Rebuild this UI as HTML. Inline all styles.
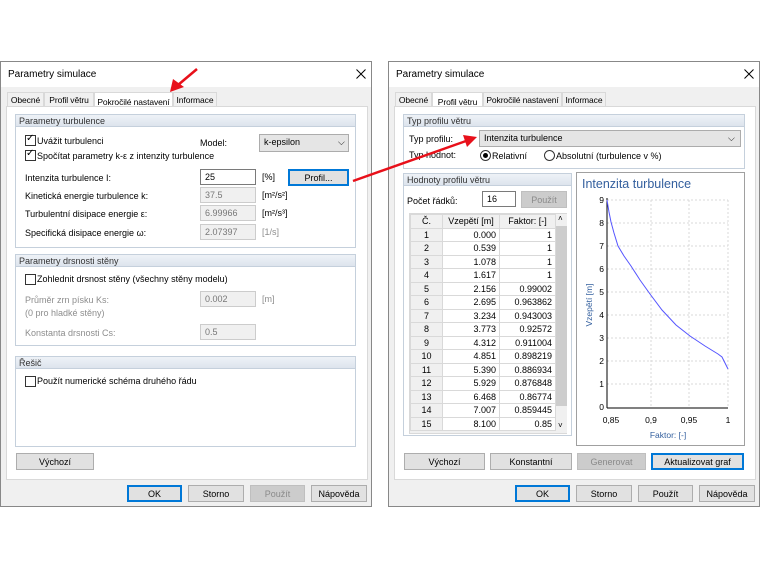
<!DOCTYPE html>
<html><head><meta charset="utf-8"><style>
*{box-sizing:border-box;margin:0;padding:0}
body{width:760px;height:570px;background:#fff;position:relative;overflow:hidden;font-family:"Liberation Sans",sans-serif;font-size:9px;color:#000}
.a{position:absolute;white-space:nowrap}
.dlg{position:absolute;top:61px;width:372px;height:446px;background:#f0f0f0;border:1px solid #888}
.tb{position:absolute;left:0;top:0;width:100%;height:25px;background:#fff}
.panel{position:absolute;background:#fff;border:1px solid #d9d9d9}
.tab{position:absolute;height:14px;border:1px solid #d9d9d9;border-bottom:none;background:#f0f0f0;padding:2px 0 0;font-size:8.5px;text-align:center;letter-spacing:-0.1px;overflow:hidden}
.tab.on{background:#fff;height:17px;top:-3px}
.grp{position:absolute;border:1px solid #c5d0dc;background:#fff}
.gh{height:12px;background:linear-gradient(#eef2f7,#dde4ed);border-bottom:1px solid #c5d0dc;color:#333;padding:1px 3px;font-size:9px}
.inp{position:absolute;height:16px;border:1px solid #ccc;background:#f0f0f0;color:#777;padding:2px 4px;font-size:9px}
.inp.w{background:#fff;border-color:#7a7a7a;color:#000}
.btn{position:absolute;height:17px;border:1px solid #adadad;background:#e1e1e1;text-align:center;padding-top:3px;font-size:9px}
.btn.f{border:1px solid #0078d7;box-shadow:inset 0 0 0 1px #0078d7}
.btn.d{background:#ccc;border-color:#bfbfbf;color:#8a8a8a}
.cb{position:absolute;width:11px;height:11px;border:1px solid #333;background:#fff}
.g{color:#8d8d8d}
table{border-collapse:collapse;font-size:9px}
td{border:1px solid #d9d9d9;height:13.5px;text-align:right;padding:0 3px}
td.n{background:#f0f0f0;text-align:center}
</style></head><body>

<!-- LEFT DIALOG -->
<div class="dlg" style="left:0">
 <div class="tb"><span class="a" style="left:7px;top:7px;font-size:10px">Parametry simulace</span><svg class="a" style="left:355px;top:7px" width="10" height="10"><path d="M0.5 0.5L9.5 9.5M9.5 0.5L0.5 9.5" stroke="#000" stroke-width="1"/></svg></div>
 <div class="tab" style="left:6px;top:30px;width:37px">Obecné</div>
 <div class="tab" style="left:43px;top:30px;width:50px">Profil větru</div>
 <div class="tab on" style="left:93px;top:30px;width:79px;background:#fff;padding-top:4px">Pokročilé nastavení</div>
 <div class="tab" style="left:172px;top:30px;width:44px">Informace</div>
 <div class="panel" style="left:5px;top:44px;width:362px;height:374px"></div>
 <div class="grp" style="left:14px;top:52px;width:341px;height:134px"><div class="gh">Parametry turbulence</div></div>
 <div class="cb" style="left:24px;top:73px"></div><span class="a" style="left:25px;top:71px;font-size:10px">✓</span><span class="a" style="left:36px;top:74px">Uvážit turbulenci</span>
 <span class="a" style="left:199px;top:76px">Model:</span>
 <div class="inp w" style="left:258px;top:72px;width:90px;height:18px;background:#e5e5e5;border-color:#acacac">k-epsilon<span class="a" style="left:78px;top:2px">⌵</span></div>
 <div class="cb" style="left:24px;top:88px"></div><span class="a" style="left:25px;top:86px;font-size:10px">✓</span><span class="a" style="left:36px;top:89px">Spočítat parametry k-ε z intenzity turbulence</span>
 <span class="a" style="left:24px;top:111px">Intenzita turbulence I:</span>
 <div class="inp w" style="left:199px;top:107px;width:56px">25</div><span class="a" style="left:261px;top:110px">[%]</span>
 <div class="btn f" style="left:287px;top:107px;width:61px">Profil...</div>
 <span class="a" style="left:24px;top:129px">Kinetická energie turbulence k:</span>
 <div class="inp" style="left:199px;top:125px;width:56px">37.5</div><span class="a" style="left:261px;top:128px">[m²/s²]</span>
 <span class="a" style="left:24px;top:147px">Turbulentní disipace energie ε:</span>
 <div class="inp" style="left:199px;top:143px;width:56px">6.99966</div><span class="a" style="left:261px;top:146px">[m²/s³]</span>
 <span class="a" style="left:24px;top:166px">Specifická disipace energie ω:</span>
 <div class="inp" style="left:199px;top:162px;width:56px">2.07397</div><span class="a g" style="left:261px;top:165px">[1/s]</span>
 <div class="grp" style="left:14px;top:192px;width:341px;height:92px"><div class="gh">Parametry drsnosti stěny</div></div>
 <div class="cb" style="left:24px;top:212px"></div><span class="a" style="left:36px;top:212px">Zohlednit drsnost stěny (všechny stěny modelu)</span>
 <span class="a g" style="left:24px;top:233px">Průměr zrn písku Ks:</span>
 <span class="a g" style="left:24px;top:246px">(0 pro hladké stěny)</span>
 <div class="inp" style="left:199px;top:229px;width:56px">0.002</div><span class="a g" style="left:261px;top:232px">[m]</span>
 <span class="a g" style="left:24px;top:266px">Konstanta drsnosti Cs:</span>
 <div class="inp" style="left:199px;top:262px;width:56px">0.5</div>
 <div class="grp" style="left:14px;top:294px;width:341px;height:91px"><div class="gh">Řešič</div></div>
 <div class="cb" style="left:24px;top:314px"></div><span class="a" style="left:36px;top:314px">Použít numerické schéma druhého řádu</span>
 <div class="btn" style="left:15px;top:391px;width:78px">Výchozí</div>
 <div class="btn f" style="left:126px;top:423px;width:55px">OK</div>
 <div class="btn" style="left:187px;top:423px;width:56px">Storno</div>
 <div class="btn d" style="left:249px;top:423px;width:55px">Použít</div>
 <div class="btn" style="left:310px;top:423px;width:56px">Nápověda</div>
</div>

<!-- RIGHT DIALOG -->
<div class="dlg" style="left:388px">
 <div class="tb"><span class="a" style="left:7px;top:7px;font-size:10px">Parametry simulace</span><svg class="a" style="left:355px;top:7px" width="10" height="10"><path d="M0.5 0.5L9.5 9.5M9.5 0.5L0.5 9.5" stroke="#000" stroke-width="1"/></svg></div>
 <div class="tab" style="left:6px;top:30px;width:37px">Obecné</div>
 <div class="tab on" style="left:43px;top:30px;width:51px;background:#fff;padding-top:4px">Profil větru</div>
 <div class="tab" style="left:94px;top:30px;width:79px">Pokročilé nastavení</div>
 <div class="tab" style="left:173px;top:30px;width:44px">Informace</div>
 <div class="panel" style="left:5px;top:44px;width:362px;height:374px"></div>
 <div class="grp" style="left:14px;top:52px;width:342px;height:55px"><div class="gh">Typ profilu větru</div></div>
 <span class="a" style="left:20px;top:72px">Typ profilu:</span>
 <div class="inp w" style="left:90px;top:68px;width:262px;height:17px;background:#e5e5e5;border-color:#acacac">Intenzita turbulence<span class="a" style="left:248px;top:2px">⌵</span></div>
 <span class="a" style="left:20px;top:88px">Typ hodnot:</span>
 <div class="a" style="left:91px;top:88px;width:11px;height:11px;border:1px solid #333;border-radius:50%;background:#fff"><div style="margin:2px;width:5px;height:5px;border-radius:50%;background:#000"></div></div>
 <span class="a" style="left:103px;top:89px">Relativní</span>
 <div class="a" style="left:155px;top:88px;width:11px;height:11px;border:1px solid #333;border-radius:50%;background:#fff"></div>
 <span class="a" style="left:167px;top:89px">Absolutní (turbulence v %)</span>
 <div class="grp" style="left:14px;top:111px;width:169px;height:263px"><div class="gh">Hodnoty profilu větru</div></div>
 <span class="a" style="left:18px;top:134px">Počet řádků:</span>
 <div class="inp w" style="left:93px;top:129px;width:34px">16</div>
 <div class="btn d" style="left:132px;top:129px;width:46px">Použít</div>
 <div class="a" style="left:20px;top:151px;width:158px;height:221px;border:1px solid #d9d9d9;background:#f0f0f0">
  <table style="position:absolute;left:0;top:0;width:146px;background:#fff">
   <tr><td class="n" style="width:32px">Č.</td><td class="n" style="width:57px">Vzepětí [m]</td><td class="n">Faktor: [-]</td></tr>
   <tr><td class="n">1</td><td>0.000</td><td>1</td></tr>
   <tr><td class="n">2</td><td>0.539</td><td>1</td></tr>
   <tr><td class="n">3</td><td>1.078</td><td>1</td></tr>
   <tr><td class="n">4</td><td>1.617</td><td>1</td></tr>
   <tr><td class="n">5</td><td>2.156</td><td>0.99002</td></tr>
   <tr><td class="n">6</td><td>2.695</td><td>0.963862</td></tr>
   <tr><td class="n">7</td><td>3.234</td><td>0.943003</td></tr>
   <tr><td class="n">8</td><td>3.773</td><td>0.92572</td></tr>
   <tr><td class="n">9</td><td>4.312</td><td>0.911004</td></tr>
   <tr><td class="n">10</td><td>4.851</td><td>0.898219</td></tr>
   <tr><td class="n">11</td><td>5.390</td><td>0.886934</td></tr>
   <tr><td class="n">12</td><td>5.929</td><td>0.876848</td></tr>
   <tr><td class="n">13</td><td>6.468</td><td>0.86774</td></tr>
   <tr><td class="n">14</td><td>7.007</td><td>0.859445</td></tr>
   <tr><td class="n">15</td><td>8.100</td><td>0.85</td></tr>
  </table>
  <div class="a" style="left:146px;top:0;width:11px;height:219px;background:#f0f0f0"><div style="margin-top:12px;height:180px;background:#cdcdcd"></div></div>
  <span class="a" style="left:148px;top:0;font-size:8px">˄</span><span class="a" style="left:148px;top:207px;font-size:8px">˅</span>
 </div>
 <div class="btn" style="left:15px;top:391px;width:81px">Výchozí</div>
 <div class="btn" style="left:101px;top:391px;width:82px">Konstantní</div>
 <div class="btn d" style="left:188px;top:391px;width:69px">Generovat</div>
 <div class="btn f" style="left:262px;top:391px;width:93px">Aktualizovat graf</div>
 <div class="btn f" style="left:126px;top:423px;width:55px">OK</div>
 <div class="btn" style="left:187px;top:423px;width:56px">Storno</div>
 <div class="btn" style="left:249px;top:423px;width:55px">Použít</div>
 <div class="btn" style="left:310px;top:423px;width:56px">Nápověda</div>
</div>

<!-- chart -->
<svg class="a" style="left:576px;top:172px" width="169" height="274" viewBox="576 172 169 274">
 <rect x="576.5" y="172.5" width="168" height="273" fill="#fff" stroke="#a0a0a0"/>
 <text x="582" y="188" font-family="Liberation Sans" font-size="12.5" fill="#335f9e">Intenzita turbulence</text>
 <g stroke="#d8d8d8" stroke-dasharray="2,2">
  <line x1="607" y1="200" x2="728" y2="200"/><line x1="607" y1="223" x2="728" y2="223"/><line x1="607" y1="246" x2="728" y2="246"/><line x1="607" y1="269" x2="728" y2="269"/><line x1="607" y1="292" x2="728" y2="292"/><line x1="607" y1="315" x2="728" y2="315"/><line x1="607" y1="338" x2="728" y2="338"/><line x1="607" y1="361" x2="728" y2="361"/><line x1="607" y1="384" x2="728" y2="384"/>
  <line x1="651" y1="200" x2="651" y2="407"/><line x1="689" y1="200" x2="689" y2="407"/><line x1="728" y1="200" x2="728" y2="407"/>
 </g>
 <line x1="607" y1="198" x2="607" y2="408" stroke="#000"/>
 <line x1="607" y1="408" x2="728" y2="408" stroke="#000"/>
 <g font-family="Liberation Sans" font-size="8.5" fill="#000" text-anchor="end">
  <text x="604" y="203">9</text><text x="604" y="226">8</text><text x="604" y="249">7</text><text x="604" y="272">6</text><text x="604" y="295">5</text><text x="604" y="318">4</text><text x="604" y="341">3</text><text x="604" y="364">2</text><text x="604" y="387">1</text><text x="604" y="410">0</text>
 </g>
 <g font-family="Liberation Sans" font-size="8.5" text-anchor="middle">
  <text x="611" y="423">0,85</text><text x="651" y="423">0,9</text><text x="689" y="423">0,95</text><text x="728" y="423">1</text>
  <text x="668" y="438" fill="#335f9e">Faktor: [-]</text>
 </g>
 <text transform="translate(592,305) rotate(-90)" font-family="Liberation Sans" font-size="8.5" fill="#335f9e" text-anchor="middle">Vzepětí [m]</text>
 <polyline fill="none" stroke="#5555ff" stroke-width="1" points="607,200 609,212 611,222 614,233 618,246 624,256 631,266 640,280 650,294 662,310 676,325 690,336 705,346 718,354 722,357 728,369"/>
</svg>

<!-- red arrows -->
<svg class="a" style="left:0;top:0" width="760" height="570">
 <line x1="197" y1="69" x2="178" y2="85" stroke="#e8101a" stroke-width="2.5"/>
 <polygon points="170,92 173,79 184,87" fill="#e8101a"/>
 <line x1="353" y1="181" x2="466" y2="141" stroke="#e8101a" stroke-width="2.5"/>
 <polygon points="477,137 463,135 467,147" fill="#e8101a"/>
</svg>
</body></html>
